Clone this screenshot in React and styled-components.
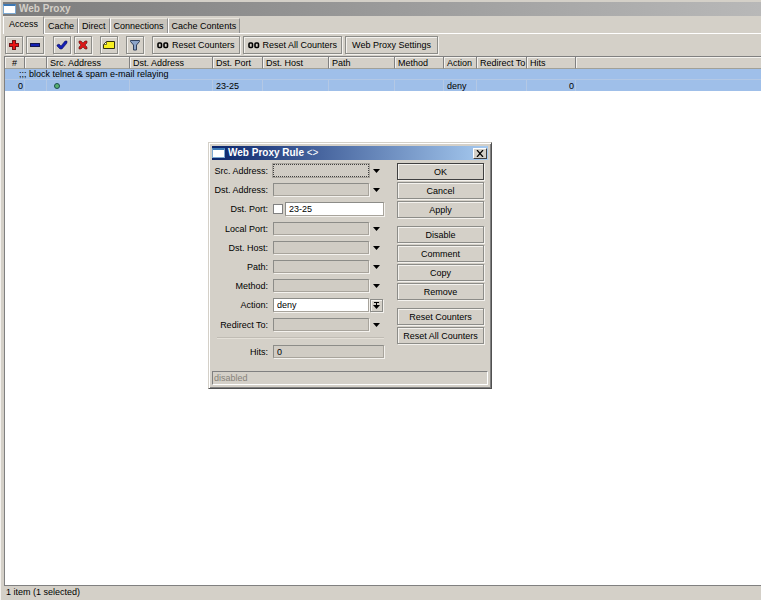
import React from 'react'
import styled, { createGlobalStyle, css } from 'styled-components'

const GlobalStyle = createGlobalStyle`
  * {
    box-sizing: border-box;
  }
  body {
    margin: 0;
    background: #d4d0c8;
  }
  body, button, input, select {
    font-family: "Liberation Sans", Arial, sans-serif;
    font-size: 9px;
    line-height: 11px;
    color: #000;
  }
`

const Page = styled.div`
  position: relative;
  display: flex;
  flex-direction: column;
  height: 100vh;
  overflow: hidden;
  padding: 2px 0 0 2px;
  border-left: 1px solid #f4f2ee;
  background: #d4d0c8;
`

const TitleBar = styled.header`
  display: flex;
  align-items: center;
  gap: 3px;
  flex: none;
  height: 14px;
  padding-right: 1px;
  color: ${props => (props.$active ? '#fff' : '#d4d0c8')};
  background: ${props =>
    props.$active
      ? 'linear-gradient(to right, #0a246a, #a6caf0)'
      : 'linear-gradient(to right, #7c7c7c, #b8b8b8)'};
`

const Title = styled.h1`
  flex: 1;
  margin: 0;
  font-size: 10px;
  font-weight: bold;
  line-height: 12px;
`

const TitleSuffix = styled.span`
  font-weight: normal;
`

const WindowIcon = styled.span`
  width: 13px;
  height: 10px;
  border: 1px solid #7ca8d0;
  border-top: 2px solid #3c78b4;
  background: #fff;
`

const Tabs = styled.nav`
  display: flex;
  align-items: flex-end;
  flex: none;
  height: 18px;
  border-bottom: 1px solid #fff;
`

const Tab = styled.button`
  height: 15px;
  padding: 0 3px;
  border: solid;
  border-width: 1px 1px 0;
  border-color: #e8e4dc #909090 #fff #fff;
  background: #c8c4bc;
  ${props =>
    props.$active &&
    css`
      height: 18px;
      margin-bottom: -1px;
      padding: 0 5px 2px;
      background: #d4d0c8;
    `}
`

const Toolbar = styled.div`
  display: flex;
  align-items: center;
  flex: none;
  gap: 3px;
  height: 22px;
  padding-left: 2px;
`

const ToolGroup = styled.div`
  display: flex;
  gap: 3px;
  margin-right: 6px;

  & + & {
    margin-right: 5px;
  }
`

const bevel = css`
  border: 1px solid #8c8c88;
  background: #d4d0c8;
  box-shadow: inset 1px 1px #f4f2ee, 1px 1px #f4f2ee;
`

const ToolButton = styled.button`
  ${bevel}
  display: flex;
  align-items: center;
  justify-content: center;
  gap: 3px;
  width: ${props => (props.$text ? 'auto' : '18px')};
  height: 18px;
  padding: ${props => (props.$text ? '0 4px' : 0)};
`

const PlainToolButton = styled(ToolButton)`
  padding: 0 6px;
`

const ListArea = styled.main`
  flex: 1;
  margin-left: 1px;
  border: solid #808080;
  border-width: 1px 0 1px 1px;
  background: #fff;
`

const Table = styled.table`
  width: 100%;
  table-layout: fixed;
  border-collapse: separate;
  border-spacing: 0;
  white-space: nowrap;

  th, td {
    padding: 0 3px;
    line-height: 10px;
    text-align: left;
  }
  th {
    height: 12px;
    padding-right: 0;
    font-weight: normal;
    background: #d4d0c8;
    border-right: 1px solid #808080;
    border-bottom: 1px solid #a0a098;
    box-shadow: inset 1px 1px #f4f2ee;
  }
  th:first-child {
    padding: 0;
    text-align: center;
  }
  td {
    height: 11px;
    background: #9fbfe9;
    border-right: 1px solid #b4c8e4;
  }
  th:last-child, td:last-child {
    border-right: 0;
  }
`

const CommentCell = styled.td`
  && {
    padding-left: 14px;
    border-bottom: 1px solid #b4c8e4;
  }
`

const NumberCell = styled.td`
  && {
    padding-right: 1px;
    text-align: right;
  }
`

const StatusDot = styled.span`
  display: block;
  width: 6px;
  height: 6px;
  margin-left: 4px;
  border: 1px solid #1c4c50;
  border-radius: 50%;
  background: #58b070;
`

const StatusBar = styled.footer`
  flex: none;
  height: 14px;
  padding: 1px 3px;
`

const Dialog = styled.section`
  position: absolute;
  top: 142px;
  left: 207px;
  width: 284px;
  padding: 3px;
  border: 1px solid;
  border-color: #d4d0c8 #505050 #505050 #d4d0c8;
  background: #d4d0c8;
  box-shadow: inset 1px 1px #fff, inset -1px -1px #808080;
`

const CloseButton = styled.button`
  display: flex;
  align-items: center;
  justify-content: center;
  width: 14px;
  height: 11px;
  padding: 0;
  border: 1px solid;
  border-color: #fff #404040 #404040 #fff;
  background: #d4d0c8;
`

const DialogBody = styled.div`
  display: flex;
  justify-content: space-between;
  padding: 3px 4px 0 5px;
`

const Form = styled.form`
  display: flex;
  flex-direction: column;
  gap: 6px;
  width: 167px;
  padding-top: 1px;
`

const FieldRow = styled.div`
  display: grid;
  grid-template-columns: 51px 1fr 15px;
  align-items: center;
  min-height: 13px;

  label {
    justify-self: end;
    padding-top: 1px;
    white-space: nowrap;
  }
`

const FieldBox = styled.div`
  display: flex;
  align-items: center;
  gap: 2px;
  margin-left: 5px;
  grid-column: ${props => (props.$wide ? '2 / 4' : 'auto')};
`

const inputStyle = css`
  flex: 1;
  min-width: 0;
  width: 100%;
  height: ${props => (props.$filled ? 14 : 13)}px;
  padding: 0 3px;
  border: 1px solid #8c8c88;
  border-radius: 0;
  border-right-color: #a8a49c;
  border-bottom-color: #a8a49c;
  outline: 0;
  background: ${props => (props.$filled ? '#fff' : '#d0ccc4')};
  box-shadow: 1px 1px #f4f2ee;
`

const TextInput = styled.input`
  ${inputStyle}
  ${props =>
    props.$focused &&
    css`
      border: 1px dotted #404040;
      box-shadow: 0 0 0 1px #a8a49c;
    `}
`

const Select = styled.select`
  ${inputStyle}
  appearance: none;
`

const NotBox = styled.input`
  appearance: none;
  width: 10px;
  height: 10px;
  margin: 0;
  border: 1px solid #808080;
  background: #fff;
`

const ArrowButton = styled.button`
  display: flex;
  align-items: center;
  justify-content: center;
  height: 13px;
  padding: 0;
  border: 0;
  background: none;
`

const SelectMark = styled.span`
  ${bevel}
  display: flex;
  align-items: center;
  justify-content: center;
  width: 13px;
  height: 13px;
  margin-left: 1px;
`

const Separator = styled.hr`
  width: 100%;
  height: 2px;
  margin: 0;
  border: 0;
  border-top: 1px solid #c0bcb4;
  border-bottom: 1px solid #e4e0d8;
`

const Actions = styled.div`
  display: flex;
  flex-direction: column;
  gap: 8px;
  width: 87px;
`

const ActionGroup = styled.div`
  display: flex;
  flex-direction: column;
  gap: 2px;
`

const ActionButton = styled.button`
  ${bevel}
  height: 17px;
  padding: 1px 0 0;
  border-color: ${props => (props.$default ? '#404040' : '#8c8c88')};
`

const DialogStatus = styled.p`
  height: 14px;
  margin: 13px 0 0;
  padding: 1px 1px;
  border: 1px solid;
  border-color: #808080 #fff #fff #808080;
  color: #868278;
`

const PlusIcon = () => (
  <svg width="12" height="12" viewBox="0 0 12 12">
    <path d="M4 1h4v3h3v4H8v3H4V8H1V4h3z" fill="#701418" />
    <path d="M5 2h2v3h3v2H7v3H5V7H2V5h3z" fill="#e81414" />
  </svg>
)

const MinusIcon = () => (
  <svg width="12" height="12" viewBox="0 0 12 12">
    <path d="M1 4h10v4H1z" fill="#141850" />
    <path d="M2 5h8v2H2z" fill="#1420b4" />
  </svg>
)

const CheckIcon = () => (
  <svg width="12" height="12" viewBox="0 0 12 12">
    <path d="M1 6l2-1 2 2 4-5h2v2L6 10H4L1 7z" fill="#1420b4" stroke="#08084c" strokeWidth=".5" />
  </svg>
)

const CrossIcon = () => (
  <svg width="12" height="12" viewBox="0 0 12 12">
    <path d="M2 2h2l2 2 2-2h2v2L8 6l2 2v2H8L6 8l-2 2H2V8l2-2-2-2z" fill="#d81818" stroke="#601010" strokeWidth=".6" />
  </svg>
)

const NoteIcon = () => (
  <svg width="12" height="12" viewBox="0 0 12 12">
    <path d="M.5 5.500l3-3h8v7H.5z" fill="#f8f020" stroke="#303010" />
    <path d="M1 5.500h2.500V3" fill="#fff" stroke="#303010" strokeWidth=".7" />
  </svg>
)

const FilterIcon = () => (
  <svg width="12" height="12" viewBox="0 0 12 12">
    <path d="M1.500 1.500h9v1l-3 3.500v5h-3v-5l-3-3.500z" fill="#8ca4c8" stroke="#30405c" />
  </svg>
)

const CountersIcon = () => (
  <svg width="12" height="8" viewBox="0 0 12 8">
    <rect x="1" y="2" width="3.500" height="4.500" rx="1" fill="none" stroke="#000" strokeWidth="1.600" />
    <rect x="7" y="2" width="3.500" height="4.500" rx="1" fill="none" stroke="#000" strokeWidth="1.600" />
  </svg>
)

const ArrowIcon = () => (
  <svg width="7" height="4" viewBox="0 0 7 4">
    <path d="M0 0h7L3.500 4z" fill="#000" />
  </svg>
)

const SelectIcon = () => (
  <svg width="7" height="7" viewBox="0 0 7 7">
    <path d="M1 0h5v1H1zM3 1h1v2h3L3.500 7 0 3h3z" fill="#000" />
  </svg>
)

const CloseIcon = () => (
  <svg width="8" height="7" viewBox="0 0 8 7">
    <path d="M1 0l6 7M7 0L1 7" stroke="#000" strokeWidth="1.200" />
  </svg>
)

const tabs = ['Access', 'Cache', 'Direct', 'Connections', 'Cache Contents']

const toolGroups = [
  [['Add', PlusIcon], ['Remove', MinusIcon]],
  [['Enable', CheckIcon], ['Disable', CrossIcon]],
  [['Comment', NoteIcon]],
  [['Filter', FilterIcon]],
]

const columns = [
  ['#', 20],
  ['', 22],
  ['Src. Address', 83],
  ['Dst. Address', 83],
  ['Dst. Port', 50],
  ['Dst. Host', 66],
  ['Path', 66],
  ['Method', 49],
  ['Action', 33],
  ['Redirect To', 50],
  ['Hits', 49],
]

const Col = styled.col`
  width: ${props => (props.$width ? props.$width + 'px' : 'auto')};
`

const Field = ({ id, label, focused }) => (
  <FieldRow>
    <label htmlFor={id}>{label}:</label>
    <FieldBox>
      <TextInput id={id} $focused={focused} />
    </FieldBox>
    <ArrowButton type="button" aria-label={`Expand ${label}`}>
      <ArrowIcon />
    </ArrowButton>
  </FieldRow>
)

const RuleDialog = () => (
  <Dialog role="dialog" aria-label="Web Proxy Rule">
    <TitleBar $active>
      <WindowIcon />
      <Title as="h2">
        Web Proxy Rule <TitleSuffix>&lt;&gt;</TitleSuffix>
      </Title>
      <CloseButton aria-label="Close">
        <CloseIcon />
      </CloseButton>
    </TitleBar>
    <DialogBody>
      <Form>
        <Field id="src" label="Src. Address" focused />
        <Field id="dst" label="Dst. Address" />
        <FieldRow>
          <label htmlFor="port">Dst. Port:</label>
          <FieldBox $wide>
            <NotBox type="checkbox" aria-label="Not Dst. Port" />
            <TextInput id="port" defaultValue="23-25" $filled />
          </FieldBox>
        </FieldRow>
        <Field id="local" label="Local Port" />
        <Field id="host" label="Dst. Host" />
        <Field id="path" label="Path" />
        <Field id="method" label="Method" />
        <FieldRow>
          <label htmlFor="action">Action:</label>
          <FieldBox>
            <Select id="action" defaultValue="deny" $filled>
              <option>allow</option>
              <option>deny</option>
            </Select>
          </FieldBox>
          <SelectMark>
            <SelectIcon />
          </SelectMark>
        </FieldRow>
        <Field id="redirect" label="Redirect To" />
        <Separator />
        <FieldRow>
          <label htmlFor="hits">Hits:</label>
          <FieldBox $wide>
            <TextInput id="hits" value="0" readOnly />
          </FieldBox>
        </FieldRow>
      </Form>
      <Actions>
        <ActionGroup>
          <ActionButton $default>OK</ActionButton>
          <ActionButton>Cancel</ActionButton>
          <ActionButton>Apply</ActionButton>
        </ActionGroup>
        <ActionGroup>
          <ActionButton>Disable</ActionButton>
          <ActionButton>Comment</ActionButton>
          <ActionButton>Copy</ActionButton>
          <ActionButton>Remove</ActionButton>
        </ActionGroup>
        <ActionGroup>
          <ActionButton>Reset Counters</ActionButton>
          <ActionButton>Reset All Counters</ActionButton>
        </ActionGroup>
      </Actions>
    </DialogBody>
    <DialogStatus>disabled</DialogStatus>
  </Dialog>
)

const App = () => (
  <Page>
    <GlobalStyle />
    <TitleBar>
      <WindowIcon />
      <Title>Web Proxy</Title>
    </TitleBar>
    <Tabs>
      {tabs.map((tab, i) => (
        <Tab key={tab} $active={i === 0}>{tab}</Tab>
      ))}
    </Tabs>
    <Toolbar>
      {toolGroups.map((group, i) => (
        <ToolGroup key={i}>
          {group.map(([name, Icon]) => (
            <ToolButton key={name} aria-label={name}>
              <Icon />
            </ToolButton>
          ))}
        </ToolGroup>
      ))}
      <ToolButton $text><CountersIcon />Reset Counters</ToolButton>
      <ToolButton $text><CountersIcon />Reset All Counters</ToolButton>
      <PlainToolButton $text>Web Proxy Settings</PlainToolButton>
    </Toolbar>
    <ListArea>
      <Table>
        <colgroup>
          {columns.map(([name, width]) => (
            <Col key={name} $width={width} />
          ))}
          <Col />
        </colgroup>
        <thead>
          <tr>
            {columns.map(([name]) => (
              <th key={name}>{name}</th>
            ))}
            <th />
          </tr>
        </thead>
        <tbody>
          <tr>
            <CommentCell colSpan={12}>;;; block telnet &amp; spam e-mail relaying</CommentCell>
          </tr>
          <tr>
            <NumberCell>0</NumberCell>
            <td />
            <td><StatusDot /></td>
            <td />
            <td>23-25</td>
            <td />
            <td />
            <td />
            <td>deny</td>
            <td />
            <NumberCell>0</NumberCell>
            <td />
          </tr>
        </tbody>
      </Table>
    </ListArea>
    <StatusBar>1 item (1 selected)</StatusBar>
    <RuleDialog />
  </Page>
)

export default App
